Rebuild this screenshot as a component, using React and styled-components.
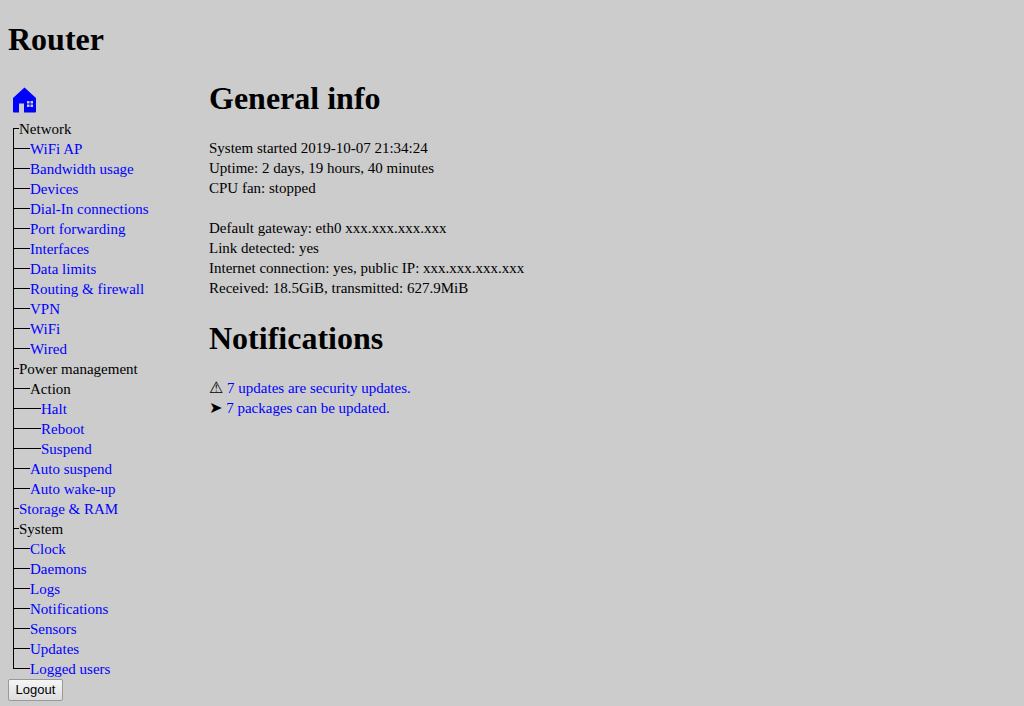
import React from "react";
import styled, { createGlobalStyle } from "styled-components";

const GlobalStyle = createGlobalStyle`
  body {
    margin: 0;
    background: #cccccc;
    color: #000000;
    font-family: "Liberation Serif", "Times New Roman", serif;
    font-size: 15px;
    line-height: 20px;
  }
`;

const Page = styled.div`
  padding: 0 8px 4px;
`;

const Heading = styled.h1`
  margin: 0 0 22px;
  font-size: 32px;
  line-height: 36px;
  font-weight: bold;
`;

const Header = styled.header`
  padding: 21px 0 1px;
`;

const Columns = styled.div`
  display: flex;
  align-items: flex-start;
`;

const Sidebar = styled.div`
  flex: 0 0 201px;
`;

const Main = styled.main`
  flex: 1;
  min-width: 0;
`;

const Section = styled.section`
  margin-bottom: 22px;
`;

const Link = styled.a`
  color: #0000ff;
  text-decoration: none;
`;

const HomeLink = styled(Link)`
  display: block;
  width: 32px;
  height: 39px;

  svg {
    display: block;
  }
`;

const Tree = styled.ul`
  list-style: none;
  margin: 0;
  padding: 0 0 0 5px;
`;

const Row = styled.li`
  display: flex;
  height: 20px;
  white-space: nowrap;
`;

const branchWidths = [6, 17, 28];
const trunkHeights = { first: "11px", middle: "20px", last: "10px" };

const Branch = styled.span`
  flex: none;
  width: ${({ $level }) => branchWidths[$level]}px;
  background-image: linear-gradient(#000, #000), linear-gradient(#000, #000);
  background-repeat: no-repeat;
  background-size: 100% 1px, 1px ${({ $place }) => trunkHeights[$place]};
  background-position: 0 9px, 0 ${({ $place }) => ($place === "first" ? "bottom" : "top")};
`;

const Info = styled.p`
  margin: 0 0 20px;

  &:last-child {
    margin: 0;
  }
`;

const Line = styled.span`
  display: block;
  height: 20px;
  white-space: nowrap;
`;

const Symbol = styled.span`
  font-family: "DejaVu Sans", sans-serif;
  font-size: 16px;
`;

const Logout = styled.button`
  display: block;
  box-sizing: border-box;
  width: 55px;
  height: 22px;
  padding: 0;
  border: 1px solid #999999;
  border-radius: 2px;
  background: linear-gradient(#f6f6f6, #dddddd);
  color: #000000;
  font-family: "Liberation Sans", Arial, sans-serif;
  font-size: 13px;
  line-height: 20px;
`;

const menu = [
  ["Network", 0, false],
  ["WiFi AP", 1, true],
  ["Bandwidth usage", 1, true],
  ["Devices", 1, true],
  ["Dial-In connections", 1, true],
  ["Port forwarding", 1, true],
  ["Interfaces", 1, true],
  ["Data limits", 1, true],
  ["Routing & firewall", 1, true],
  ["VPN", 1, true],
  ["WiFi", 1, true],
  ["Wired", 1, true],
  ["Power management", 0, false],
  ["Action", 1, false],
  ["Halt", 2, true],
  ["Reboot", 2, true],
  ["Suspend", 2, true],
  ["Auto suspend", 1, true],
  ["Auto wake-up", 1, true],
  ["Storage & RAM", 0, true],
  ["System", 0, false],
  ["Clock", 1, true],
  ["Daemons", 1, true],
  ["Logs", 1, true],
  ["Notifications", 1, true],
  ["Sensors", 1, true],
  ["Updates", 1, true],
  ["Logged users", 1, true],
];

const placeOf = (index) =>
  index === 0 ? "first" : index === menu.length - 1 ? "last" : "middle";

function HomeIcon() {
  return (
    <svg width="32" height="39" viewBox="0 0 32 39" aria-hidden="true">
      <path
        fill="#0000ff"
        fillRule="evenodd"
        d="M16.5 7.5 L28 18 V31.5 Q28 32.5 27 32.5 H16 V23.5 H11 V32.5 H6 Q5 32.5 5 31.5 V18 Z M19 21 H21.5 V23.5 H19 Z M22.5 21 H25 V23.5 H22.5 Z M19 24.5 H21.5 V27 H19 Z M22.5 24.5 H25 V27 H22.5 Z"
      />
    </svg>
  );
}

export default function App() {
  return (
    <Page>
      <GlobalStyle />
      <Header>
        <Heading>Router</Heading>
      </Header>
      <Columns>
        <Sidebar>
          <nav>
            <HomeLink href="#home" aria-label="Home">
              <HomeIcon />
            </HomeLink>
            <Tree>
              {menu.map(([label, level, linked], index) => (
                <Row key={label}>
                  <Branch $level={level} $place={placeOf(index)} />
                  {linked ? <Link href="#page">{label}</Link> : label}
                </Row>
              ))}
            </Tree>
          </nav>
          <Logout type="button">Logout</Logout>
        </Sidebar>
        <Main>
          <Section>
            <Heading>General info</Heading>
            <Info>
              <Line>System started 2019-10-07 21:34:24</Line>
              <Line>Uptime: 2 days, 19 hours, 40 minutes</Line>
              <Line>CPU fan: stopped</Line>
            </Info>
            <Info>
              <Line>Default gateway: eth0 xxx.xxx.xxx.xxx</Line>
              <Line>Link detected: yes</Line>
              <Line>Internet connection: yes, public IP: xxx.xxx.xxx.xxx</Line>
              <Line>Received: 18.5GiB, transmitted: 627.9MiB</Line>
            </Info>
          </Section>
          <Section>
            <Heading>Notifications</Heading>
            <Info>
              <Line>
                <Symbol>⚠</Symbol> <Link href="#security">7 updates are security updates.</Link>
              </Line>
              <Line>
                <Symbol>➤</Symbol> <Link href="#packages">7 packages can be updated.</Link>
              </Line>
            </Info>
          </Section>
        </Main>
      </Columns>
    </Page>
  );
}
